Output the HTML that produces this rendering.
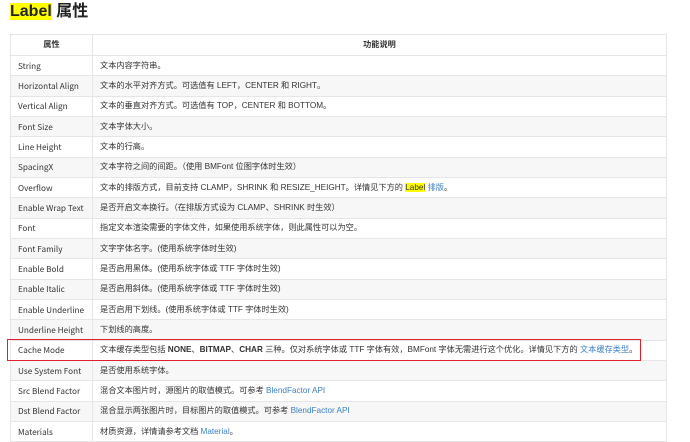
<!DOCTYPE html>
<html><head><meta charset="utf-8"><style>
body{margin:0;background:#fff;font-family:"Liberation Sans","Noto Sans CJK SC",sans-serif;color:#333;width:690px;height:438px;overflow:hidden;position:relative}
h1{position:absolute;left:10px;top:0;margin:0;font-size:16px;line-height:24px;font-weight:bold;color:#222}
.hl{background:#ffff00}
table{position:absolute;left:10px;top:34px;width:657px;border-collapse:collapse;font-size:8.2px}
td,th{border:1px solid #e6e6e6;height:19.33px;padding:0 7px;text-align:left;white-space:nowrap;vertical-align:middle;line-height:10px}
td span.c{display:inline-block;vertical-align:middle;line-height:10px}
th{text-align:center;font-weight:bold;height:20px}
tr:nth-child(odd) td{background:#f7f7f7}
tr.w td{background:#fff}
td:first-child{width:67px;font-family:"Noto Sans CJK SC",sans-serif;font-size:8.2px}
a{color:#3c7fc2;text-decoration:none}
.red{position:absolute;left:7px;top:339px;width:634px;height:22px;border:1.5px solid #e0202a;box-sizing:border-box}
</style></head><body>
<h1><span class="hl">Label</span> 属性</h1>
<table>
<tr><th>属性</th><th>功能说明</th></tr>
<tr class="w"><td>String</td><td>文本内容字符串。</td></tr>
<tr><td>Horizontal Align</td><td>文本的水平对齐方式。可选值有 LEFT，CENTER 和 RIGHT。</td></tr>
<tr class="w"><td>Vertical Align</td><td>文本的垂直对齐方式。可选值有 TOP，CENTER 和 BOTTOM。</td></tr>
<tr><td>Font Size</td><td>文本字体大小。</td></tr>
<tr class="w"><td>Line Height</td><td>文本的行高。</td></tr>
<tr><td>SpacingX</td><td>文本字符之间的间距。（使用 BMFont 位图字体时生效）</td></tr>
<tr class="w"><td>Overflow</td><td>文本的排版方式，目前支持 CLAMP，SHRINK 和 RESIZE_HEIGHT。详情见下方的 <span class="hl">Label</span> <a>排版</a>。</td></tr>
<tr><td>Enable Wrap Text</td><td>是否开启文本换行。（在排版方式设为 CLAMP、SHRINK 时生效）</td></tr>
<tr class="w"><td>Font</td><td>指定文本渲染需要的字体文件，如果使用系统字体，则此属性可以为空。</td></tr>
<tr><td>Font Family</td><td>文字字体名字。(使用系统字体时生效)</td></tr>
<tr class="w"><td>Enable Bold</td><td>是否启用黑体。(使用系统字体或 TTF 字体时生效)</td></tr>
<tr><td>Enable Italic</td><td>是否启用斜体。(使用系统字体或 TTF 字体时生效)</td></tr>
<tr class="w"><td>Enable Underline</td><td>是否启用下划线。(使用系统字体或 TTF 字体时生效)</td></tr>
<tr><td>Underline Height</td><td>下划线的高度。</td></tr>
<tr class="w"><td>Cache Mode</td><td>文本缓存类型包括 <b>NONE</b>、<b>BITMAP</b>、<b>CHAR</b> 三种。仅对系统字体或 TTF 字体有效，BMFont 字体无需进行这个优化。详情见下方的 <a>文本缓存类型</a>。</td></tr>
<tr><td>Use System Font</td><td>是否使用系统字体。</td></tr>
<tr class="w"><td>Src Blend Factor</td><td>混合文本图片时，源图片的取值模式。可参考 <a>BlendFactor API</a></td></tr>
<tr><td>Dst Blend Factor</td><td>混合显示两张图片时，目标图片的取值模式。可参考 <a>BlendFactor API</a></td></tr>
<tr class="w"><td>Materials</td><td>材质资源，详情请参考文档 <a>Material</a>。</td></tr>
</table>
<div class="red"></div>
</body></html>
